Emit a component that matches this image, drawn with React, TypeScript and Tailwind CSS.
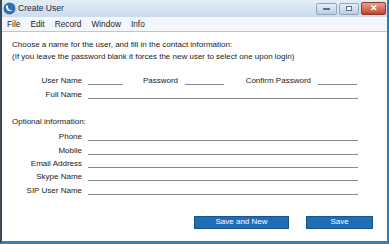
import React from "react";

const Field = ({ label }: { label: string }) => (
  <div className="flex items-end h-[13.4px]">
    <div className="w-[70px] shrink-0 text-right leading-none whitespace-nowrap">{label}</div>
    <div className="ml-[6px] border-b border-[#8a8a8a] h-[10px] flex-1" />
  </div>
);

const App = () => {
  return (
    <div
      className="w-[389px] h-[244px] flex flex-col bg-white border-l-2 border-l-[#3c4a55] border-r-2 border-r-[#2a7fae] border-b-[3px] border-b-[#2a86b8] text-[8px] text-[#1a1a1a] overflow-hidden"
      style={{ fontFamily: '"Liberation Sans", Arial, sans-serif' }}
    >
      {/* title bar */}
      <div className="h-[17px] flex items-center bg-gradient-to-b from-[#e3edf7] to-[#cbdcee] pl-[1px]">
        <svg width="13" height="13" viewBox="0 0 13 13" className="mr-[2px]">
          <circle cx="6.5" cy="6.5" r="6" fill="#2f6fb6" />
          <path d="M3 3.5 C2.5 8 6 10.5 10 8.5 C7 9 4.5 7 5 3.5 Z" fill="#fff" />
        </svg>
        <span className="text-[8.5px] text-[#1e2a36]">Create User</span>
        <div className="ml-auto flex items-center gap-[2px] pr-[1px]">
          <div className="w-[21px] h-[12px] rounded-[2px] border border-[#8fa6bf] bg-gradient-to-b from-[#e7eef6] to-[#bccde0] flex items-center justify-center">
            <div className="w-[7px] h-[2px] bg-white border border-[#55708f]" />
          </div>
          <div className="w-[20px] h-[12px] rounded-[2px] border border-[#8fa6bf] bg-gradient-to-b from-[#e7eef6] to-[#bccde0] flex items-center justify-center">
            <div className="w-[6px] h-[5px] border border-[#55708f] bg-white" />
          </div>
          <div className="w-[25px] h-[13px] rounded-[2px] border border-[#8d3a2c] bg-gradient-to-b from-[#e7a292] to-[#c2412c] flex items-center justify-center text-white text-[9px] font-bold leading-none">
            ✕
          </div>
        </div>
      </div>
      {/* menu bar */}
      <div className="h-[15px] flex items-center gap-[10px] pl-[5px] bg-[#f3f6fa] border-b border-[#b9c6d3] text-[8.3px] text-[#1e1e1e]">
        <span>File</span>
        <span>Edit</span>
        <span>Record</span>
        <span>Window</span>
        <span>Info</span>
      </div>
      {/* content */}
      <div className="flex-1 flex flex-col pl-[10px] pr-[29px] pt-[7px]">
        <div className="leading-[12px] whitespace-nowrap">Choose a name for the user, and fill in the contact information:</div>
        <div className="leading-[12px] whitespace-nowrap">(If you leave the password blank it forces the new user to select one upon login)</div>
        <div className="mt-[9px] flex items-end h-[13.4px] whitespace-nowrap">
          <div className="w-[70px] shrink-0 text-right leading-none">User Name</div>
          <div className="ml-[6px] border-b border-[#8a8a8a] h-[10px] w-[35px] shrink-0" />
          <div className="w-[55px] shrink-0 text-right leading-none">Password</div>
          <div className="ml-[7px] border-b border-[#8a8a8a] h-[10px] w-[39px] shrink-0" />
          <div className="w-[87px] shrink-0 text-right leading-none">Confirm Password</div>
          <div className="ml-[7px] border-b border-[#8a8a8a] h-[10px] w-[39px] shrink-0" />
        </div>
        <Field label="Full Name" />
        <div className="mt-[17px] leading-[12px]">Optional information:</div>
        <Field label="Phone" />
        <Field label="Mobile" />
        <Field label="Email Address" />
        <Field label="Skype Name" />
        <Field label="SIP User Name" />
        <div className="mt-[21px] flex justify-end gap-[17px] mr-[-15px]">
          <button className="w-[95px] h-[13px] bg-[#1f6db5] text-white text-[8px] leading-none border border-[#16558f]">
            Save and New
          </button>
          <button className="w-[67px] h-[13px] bg-[#1f6db5] text-white text-[8px] leading-none border border-[#16558f]">
            Save
          </button>
        </div>
      </div>
    </div>
  );
};

export default App;
